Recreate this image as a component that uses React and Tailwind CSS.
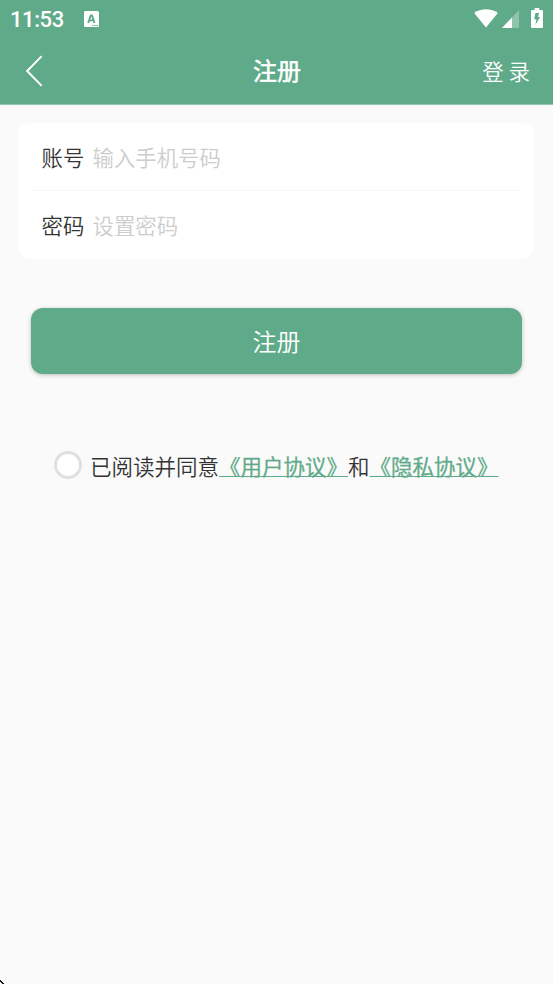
function StatusBar() {
  return (
    <div className="flex h-[37px] items-center pl-[10px] pr-[10px]">
      <span className="w-[74px] pt-[2px] font-[Roboto] text-[22px] font-medium leading-[37px] tracking-[-0.4px]">11:53</span>
      <svg className="h-[16px] w-[15px]" viewBox="0 0 15 16">
        <rect width="15" height="16" rx="1.5" fill="#fff" />
        <path d="M4.2 12 L6.8 4.4 H8 L10.6 12 M5.3 9.4 H9.5" fill="none" stroke="#5faa89" strokeWidth="1.9" />
        <path d="M8 14.4 H14" stroke="#5faa89" strokeWidth="1" strokeDasharray="1.5 0.7" />
      </svg>
      <div className="ml-auto flex items-center">
        <svg className="h-[20px] w-[24px]" viewBox="0 0 24 20">
          <path d="M12 18.4 L0.2 4 C6.8 -1 17.2 -1 23.8 4 Z" fill="#fff" />
        </svg>
        <svg className="ml-[4px] h-[18px] w-[17px]" viewBox="0 0 17 18">
          <path d="M0 18 L17 0 V18 Z" fill="#fff" fillOpacity="0.3" />
          <path d="M0 18 L10 7.4 V18 Z" fill="#fff" />
        </svg>
        <svg className="ml-[12px] mb-px h-[20px] w-[12px]" viewBox="0 0 12 20">
          <path d="M1.3 2 H3.7 V0 H8.3 V2 H10.7 Q12 2 12 3.3 V18.7 Q12 20 10.7 20 H1.3 Q0 20 0 18.7 V3.3 Q0 2 1.3 2 Z" fill="#fff" />
          <path d="M4.4 5 H8 L7 9 H9 L4.4 17 L5.4 11.3 H3.2 Z" fill="#5faa89" />
        </svg>
      </div>
    </div>
  );
}

function Header() {
  return (
    <header className="h-[105px] border-b border-[#91c5ad] bg-[#5faa89] text-white">
      <StatusBar />
      <div className="grid h-[67px] grid-cols-3 items-center pl-[24px] pr-[23px]">
        <svg className="ml-[2px] h-[32px] w-[17px]" viewBox="0 0 17 32" fill="none" stroke="#fff" strokeWidth="1.9">
          <path d="M15.7 1.2 L1.2 16 L15.7 30.8" />
        </svg>
        <h1 className="pb-[2px] text-center text-[24px] font-normal leading-[36px] [-webkit-text-stroke:0.5px_#fff]">注册</h1>
        <span className="text-right text-[21.5px] leading-[32px]">登 录</span>
      </div>
    </header>
  );
}

function Field({ label, hint }) {
  return (
    <div className="flex h-[67px] items-center pl-[10.5px] text-[21.4px] leading-[32px]">
      <span className="w-[51px] text-[#333333]">{label}</span>
      <span className="text-[#cccccc]">{hint}</span>
    </div>
  );
}

function Agreement({ children }) {
  return (
    <span className="text-[#5faa89] underline decoration-[#5faa89] decoration-1 underline-offset-[1px] [-webkit-text-stroke:0.4px_#5faa89]">
      {children}
    </span>
  );
}

export default function App() {
  return (
    <div className="relative h-[984px] w-[553px] overflow-hidden bg-[#fafafa] font-['Noto_Sans_CJK_SC',sans-serif] font-[350]">
      <Header />
      <section className="ml-[18px] mt-[18px] h-[136px] w-[516px] rounded-[12px] bg-white px-[13px]">
        <Field label="账号" hint="输入手机号码" />
        <div className="h-px bg-[#f7f7f7]" />
        <Field label="密码" hint="设置密码" />
      </section>
      <button className="ml-[31px] mt-[49px] block h-[66px] w-[491px] rounded-[12px] bg-[#5faa89] text-[24px] leading-[36px] text-white shadow-[0_1px_4px_rgba(0,0,0,0.25)]">
        注册
      </button>
      <div className="ml-[54px] mt-[74px] flex h-[34px] items-center whitespace-nowrap text-[21.5px] leading-[32px] text-[#333333]">
        <span className="mr-[8px] h-[28px] w-[28px] shrink-0 rounded-full border-[3px] border-[#e0e0e0] bg-white" />
        <p className="pt-[2px]">
          已阅读并同意<Agreement>《用户协议》</Agreement>和<Agreement>《隐私协议》</Agreement>
        </p>
      </div>
      <svg className="absolute bottom-0 left-0 h-[4px] w-[4px]" viewBox="0 0 4 4" shapeRendering="crispEdges">
        <path d="M0 0h1v1h1v1h1v1h1v1h-2v-1h-1v-1h-1z" fill="#111" />
      </svg>
    </div>
  );
}
